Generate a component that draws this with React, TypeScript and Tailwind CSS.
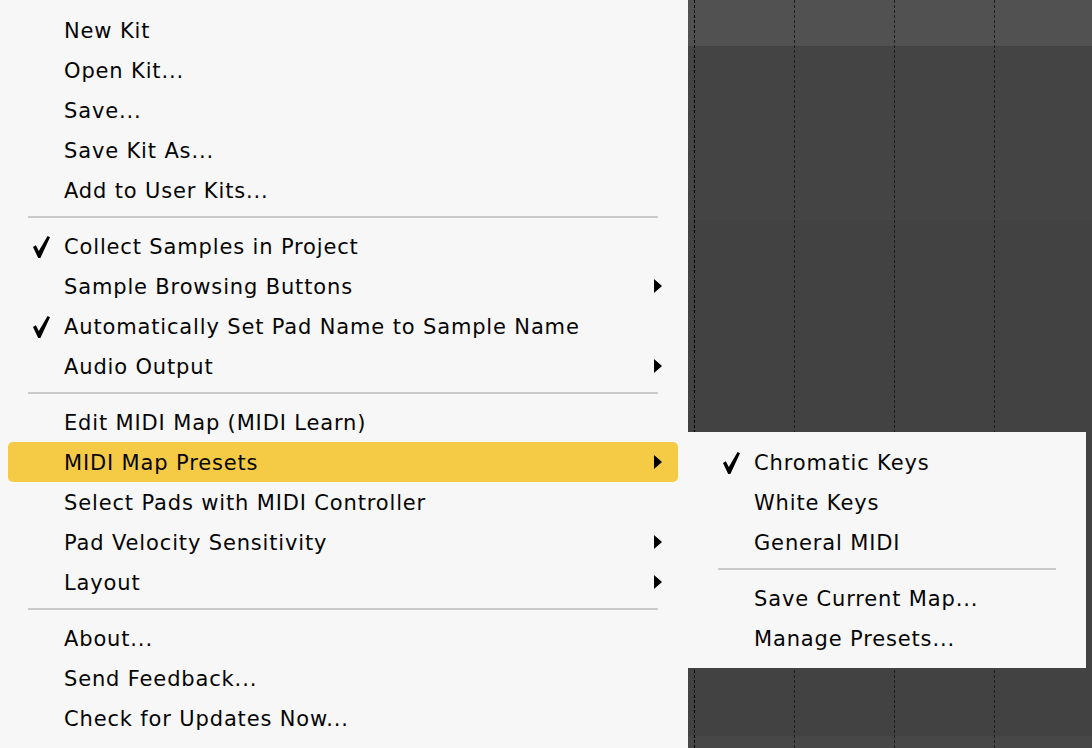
import React from "react";

type Item =
  | { type: "sep" }
  | { type: "item"; label: string; checked?: boolean; sub?: boolean; active?: boolean };

const mainItems: Item[] = [
  { type: "item", label: "New Kit" },
  { type: "item", label: "Open Kit..." },
  { type: "item", label: "Save..." },
  { type: "item", label: "Save Kit As..." },
  { type: "item", label: "Add to User Kits..." },
  { type: "sep" },
  { type: "item", label: "Collect Samples in Project", checked: true },
  { type: "item", label: "Sample Browsing Buttons", sub: true },
  { type: "item", label: "Automatically Set Pad Name to Sample Name", checked: true },
  { type: "item", label: "Audio Output", sub: true },
  { type: "sep" },
  { type: "item", label: "Edit MIDI Map (MIDI Learn)" },
  { type: "item", label: "MIDI Map Presets", sub: true, active: true },
  { type: "item", label: "Select Pads with MIDI Controller" },
  { type: "item", label: "Pad Velocity Sensitivity", sub: true },
  { type: "item", label: "Layout", sub: true },
  { type: "sep" },
  { type: "item", label: "About..." },
  { type: "item", label: "Send Feedback..." },
  { type: "item", label: "Check for Updates Now..." },
];

const subItems: Item[] = [
  { type: "item", label: "Chromatic Keys", checked: true },
  { type: "item", label: "White Keys" },
  { type: "item", label: "General MIDI" },
  { type: "sep" },
  { type: "item", label: "Save Current Map..." },
  { type: "item", label: "Manage Presets..." },
];

function Check() {
  return (
    <svg width="17" height="22" viewBox="0 0 17 22" className="block">
      <polygon points="0,11 2.8,9.2 5.8,15 14.6,0 17,1.2 7.4,22 5.2,22" fill="#000" />
    </svg>
  );
}

function Arrow() {
  return (
    <svg width="8" height="14" viewBox="0 0 8 14" className="block">
      <polygon points="0,0 8,7 0,14" fill="#000" />
    </svg>
  );
}

const font = "font-['DejaVu_Sans',sans-serif] text-[21px] text-[#050505]";

function MainMenu() {
  return (
    <div className={`w-[688px] h-[748px] shrink-0 bg-[#f7f7f7] pt-[10px] ${font}`}>
      {mainItems.map((it, i) =>
        it.type === "sep" ? (
          <div key={i} className="h-[16px] pt-[6px] pl-[28px] pr-[30px]">
            <div className="h-[2px] bg-[#cacaca]" />
          </div>
        ) : (
          <div key={i} className="pl-[8px] pr-[10px]">
            <div
              className={`flex items-center h-[40px] rounded-[5px] ${it.active ? "bg-[#f5cb46]" : ""}`}
            >
              <div className="w-[56px] shrink-0 pl-[25px] pt-[1px]">{it.checked ? <Check /> : null}</div>
              <span className="whitespace-nowrap tracking-[0.85px] pt-[4px]">{it.label}</span>
              {it.sub ? (
                <div className="ml-auto mr-[16px]">
                  <Arrow />
                </div>
              ) : null}
            </div>
          </div>
        )
      )}
    </div>
  );
}

function SubMenu() {
  return (
    <div className={`absolute left-0 top-[432px] w-[398px] h-[236px] bg-[#f7f7f7] pt-[10px] ${font}`}>
      {subItems.map((it, i) =>
        it.type === "sep" ? (
          <div key={i} className="h-[16px] pt-[6px] pl-[30px] pr-[30px]">
            <div className="h-[2px] bg-[#cacaca]" />
          </div>
        ) : (
          <div key={i} className="flex items-center h-[40px]">
            <div className="w-[66px] shrink-0 pl-[35px] pt-[1px]">{it.checked ? <Check /> : null}</div>
            <span className="whitespace-nowrap tracking-[0.85px] pt-[4px]">{it.label}</span>
          </div>
        )
      )}
    </div>
  );
}

function Canvas() {
  return (
    <div className="relative flex-1 h-[748px] flex flex-col overflow-hidden">
      <div className="h-[46px] bg-[#515151]" />
      <div className="h-[174px] bg-[#444444]" />
      <div className="h-[516px] bg-[#424242]" />
      <div className="flex-1 bg-[#474747]" />
      <div className="absolute inset-0 flex pl-[6px] pointer-events-none">
        <div className="w-[100px] shrink-0 border-l border-dashed border-[#000000]" />
        <div className="w-[100px] shrink-0 border-l border-dashed border-[#1e1e1e]" />
        <div className="w-[100px] shrink-0 border-l border-dashed border-[#1e1e1e]" />
        <div className="w-[100px] shrink-0 border-l border-dashed border-[#1e1e1e]" />
      </div>
      <SubMenu />
    </div>
  );
}

export default function App() {
  return (
    <div className="w-[1092px] h-[748px] flex overflow-hidden bg-[#444444]">
      <MainMenu />
      <Canvas />
    </div>
  );
}
